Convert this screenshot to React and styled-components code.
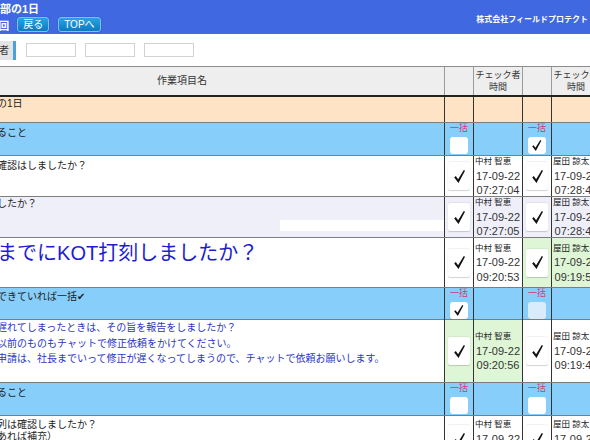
import React from 'react';
import styled, { createGlobalStyle } from 'styled-components';

// the page is scrolled sideways by 80px, so everything sits on a wider sheet
const COLS = '524px 29px 49px 29px 49px 29px 49px';
const PAIRS = 3;

const GlobalStyle = createGlobalStyle`
  html, body {
    margin: 0;
    padding: 0;
    overflow: hidden;
    background: #fff;
  }
  body {
    font-family: 'Liberation Sans', 'Noto Sans CJK JP', sans-serif;
    color: #222;
  }
`;

const rows = [
    { type: 'day', text: 'カスタマー本部の1日', h: 25, pt: 0 },
    { type: 'group', text: '朝一番にまずやること', h: 32, pt: 3, bulk: [{}, { checked: true }] },
    {
        type: 'item', text: '当日の予定表の確認はしましたか？', h: 40, pt: 3,
        checks: [
            { name: '中村 智恵', date: '17-09-22', time: '07:27:04' },
            { name: '屋田 諒太', date: '17-09-22', time: '07:28:41' },
        ],
    },
    {
        type: 'item', text: '朝礼に出席しましたか？', h: 40, pt: 0, bg: '#efeffa', memo: true,
        checks: [
            { name: '中村 智恵', date: '17-09-22', time: '07:27:05' },
            { name: '屋田 諒太', date: '17-09-22', time: '07:28:43' },
        ],
    },
    {
        type: 'item', text: '朝10:00までにKOT打刻しましたか？', big: true, h: 49, pt: 3,
        checks: [
            { name: '中村 智恵', date: '17-09-22', time: '09:20:53' },
            { name: '屋田 諒太', date: '17-09-22', time: '09:19:55', green: true },
        ],
    },
    { type: 'group', text: '上記の項目全部できていれば一括✔', h: 31, pt: 2, bulk: [{ checked: true }, { disabled: true }] },
    {
        type: 'item', blue: true, lh: 15.5, pt: 0, h: 62,
        lines: [
            'もし打刻時間が遅れてしまったときは、その旨を報告をしましたか？',
            '※打刻漏れは、以前のものもチャットで修正依頼をかけてください。',
            '※勤怠の修正の申請は、社長までいって修正が遅くなってしまうので、チャットで依頼お願いします。',
        ],
        checks: [
            { name: '中村 智恵', date: '17-09-22', time: '09:20:56', green: true },
            { name: '屋田 諒太', date: '17-09-22', time: '09:19:48' },
        ],
    },
    { type: 'group', text: '退社前にまずやること', h: 32, pt: 3, bulk: [{}, {}] },
    {
        type: 'item', lh: 12, pt: 3, h: 46,
        lines: ['商品棚の商品陳列は確認しましたか？', '（備品の不足があれば補充）'],
        checks: [
            { name: '中村 智恵', date: '17-09-22', time: '09:31:12' },
            { name: '屋田 諒太', date: '17-09-22', time: '09:32:40' },
        ],
    },
];

const Tick = ({ size = 13 }) => (
    <svg width={size * 11 / 13} height={size} viewBox="0 0 11 13">
        <path d="M0.2 7.4 L1.8 6.1 L4.1 9.2 L9.8 0.1 L11 0.8 L4.5 12.9 Z" fill="#111" />
    </svg>
);

const App = () => {
    const renderPairs = (row) => {
        const cells = [];
        for (let i = 0; i < PAIRS; i++) {
            if (row.type === 'group') {
                const b = row.bulk[i];
                cells.push(
                    <BulkCell key={`c${i}`}>
                        {b && (
                            <>
                                <BulkLabel>一括</BulkLabel>
                                <BulkBox $disabled={b.disabled}>{b.checked && <Tick size={11} />}</BulkBox>
                            </>
                        )}
                    </BulkCell>
                );
                cells.push(<InfoCell key={`i${i}`} />);
            } else if (row.type === 'item') {
                const c = row.checks[i];
                cells.push(
                    <CheckCell key={`c${i}`} $bg={c && c.green ? '#dff6d6' : null}>
                        {c && <CheckBtn><Tick /></CheckBtn>}
                    </CheckCell>
                );
                cells.push(
                    <InfoCell key={`i${i}`} $bg={c && c.green ? '#dff6d6' : null}>
                        {c && (
                            <>
                                <Name>{c.name}</Name>
                                <Stamp>{c.date}</Stamp>
                                <Stamp>{c.time}</Stamp>
                            </>
                        )}
                    </InfoCell>
                );
            } else {
                cells.push(<CheckCell key={`c${i}`} />);
                cells.push(<InfoCell key={`i${i}`} />);
            }
        }
        return cells;
    };

    return (
        <Page>
            <GlobalStyle />
            <TopBar>
                <TitleBlock>
                    <Title>カスタマー本部の1日</Title>
                    <SubLine>
                        <span>新人研修 第1回</span>
                        <NavButton>戻る</NavButton>
                        <NavButton>TOPへ</NavButton>
                    </SubLine>
                </TitleBlock>
                <Company>株式会社フィールドプロテクト</Company>
            </TopBar>

            <FilterBar>
                <FilterLabel>チェック者</FilterLabel>
                <FilterInput />
                <FilterInput />
                <FilterInput />
            </FilterBar>

            <HeadRow>
                <HeadCell $first>作業項目名</HeadCell>
                {Array.from({ length: PAIRS }).map((_, i) => (
                    <React.Fragment key={i}>
                        <HeadCell />
                        <HeadCell>
                            <span>チェック者</span>
                            <span>時間</span>
                        </HeadCell>
                    </React.Fragment>
                ))}
            </HeadRow>

            {rows.map((row, idx) => (
                <Row
                    key={idx}
                    $h={row.h}
                    $bg={row.bg || (row.type === 'day' ? '#fee3c5' : row.type === 'group' ? '#87cefa' : '#fff')}
                >
                    <MainCell $pt={row.pt} $lh={row.lh} $big={row.big} $blue={row.blue}>
                        {row.lines
                            ? row.lines.map((l) => <div key={l}>{l}</div>)
                            : row.text}
                        {row.memo && <MemoBar />}
                    </MainCell>
                    {renderPairs(row)}
                </Row>
            ))}
        </Page>
    );
};

const Page = styled.div`
    width: 758px;
    margin-left: -80px;
`;

const TopBar = styled.header`
    height: 34px;
    background: #4068e0;
    color: #fff;
    display: flex;
    justify-content: space-between;
`;

const TitleBlock = styled.div`
    padding: 3px 0 0 14px;
`;

const Title = styled.div`
    font-size: 11px;
    font-weight: bold;
    line-height: 13px;
`;

const SubLine = styled.div`
    display: flex;
    align-items: center;
    gap: 9px;
    height: 15px;
    margin-top: 1px;
    font-size: 11px;
    font-weight: bold;

    & > span:first-child {
        margin-right: -1px;
    }
`;

const NavButton = styled.button`
    height: 15px;
    padding: 0 5px;
    font-family: inherit;
    font-size: 10px;
    line-height: 13px;
    color: #fff;
    background: linear-gradient(#2aa2e6, #0c7ac2);
    border: 1px solid #78c4f0;
    border-radius: 3px;
    box-shadow: 0 0 1px #16359a;
`;

const Company = styled.div`
    padding: 15px 90px 0 0;
    font-size: 8px;
    line-height: 10px;
    font-weight: bold;
    white-space: nowrap;
`;

const FilterBar = styled.div`
    height: 32px;
    display: flex;
    align-items: center;
    padding-left: 35px;
    gap: 9px;
`;

const FilterLabel = styled.div`
    height: 19px;
    line-height: 19px;
    padding: 0 4px;
    margin-right: 1px;
    font-size: 10px;
    color: #333;
    background: #e4e4e4;
    border-right: 3px solid #4aa3d8;
`;

const FilterInput = styled.input`
    box-sizing: border-box;
    width: 50px;
    height: 14px;
    border: 1px solid #d2d2d2;
    background: #fff;
`;

const HeadRow = styled.div`
    display: grid;
    grid-template-columns: ${COLS};
    height: 28px;
    background: #eeeeee;
    border-top: 1px solid #8c8c8c;
    border-bottom: 2px solid #222;
`;

const HeadCell = styled.div`
    border-left: ${p => (p.$first ? 'none' : '1px solid #9a9a9a')};
    display: flex;
    flex-direction: column;
    align-items: center;
    justify-content: center;
    font-size: ${p => (p.$first ? 10 : 9)}px;
    line-height: 12px;
    color: #333;
    white-space: nowrap;
    overflow: hidden;
`;

const Row = styled.div`
    display: grid;
    grid-template-columns: ${COLS};
    height: ${p => p.$h}px;
    background: ${p => p.$bg};
    border-bottom: 1px solid #7d7d7d;
`;

const MainCell = styled.div`
    padding: ${p => p.$pt || 0}px 0 0 7px;
    font-size: ${p => (p.$big ? 20 : 10)}px;
    line-height: ${p => (p.$big ? 24 : p.$lh || 14)}px;
    color: ${p => (p.$big ? '#1c1cd2' : p.$blue ? '#2a36c4' : '#222')};
    white-space: nowrap;
    overflow: hidden;
`;

const MemoBar = styled.div`
    width: 164px;
    height: 11px;
    margin: 9px 0 0 auto;
    background: #fff;
`;

const CheckCell = styled.div`
    border-left: 1px solid #333;
    background: ${p => p.$bg || 'transparent'};
    display: flex;
    align-items: center;
    justify-content: center;
    overflow: hidden;
`;

const CheckBtn = styled.div`
    width: 22px;
    height: 28px;
    flex-shrink: 0;
    background: #fff;
    border-radius: 2px;
    box-shadow: 0 1px 1px rgba(0, 0, 0, 0.18), 0 -1px 1px rgba(0, 0, 0, 0.06);
    display: flex;
    align-items: center;
    justify-content: center;
`;

const BulkCell = styled.div`
    border-left: 1px solid #333;
    display: flex;
    flex-direction: column;
    align-items: center;
    justify-content: flex-end;
    padding-bottom: 1px;
`;

const BulkLabel = styled.div`
    font-size: 9px;
    line-height: 10px;
    color: #d8356b;
`;

const BulkBox = styled.div`
    width: 18px;
    height: 17px;
    margin-top: 4px;
    border-radius: 3px;
    background: ${p => (p.$disabled ? '#d9ecfb' : '#fff')};
    display: flex;
    align-items: center;
    justify-content: center;
`;

const InfoCell = styled.div`
    border-left: 1px solid #333;
    background: ${p => p.$bg || 'transparent'};
    display: flex;
    flex-direction: column;
    align-items: center;
    justify-content: center;
    overflow: hidden;
    white-space: nowrap;
`;

const Name = styled.div`
    align-self: flex-start;
    padding-left: 1px;
    font-size: 8.5px;
    line-height: 14.5px;
    color: #222;
`;

const Stamp = styled.div`
    font-size: 11px;
    line-height: 14.5px;
    color: #333;
`;

export default App;
